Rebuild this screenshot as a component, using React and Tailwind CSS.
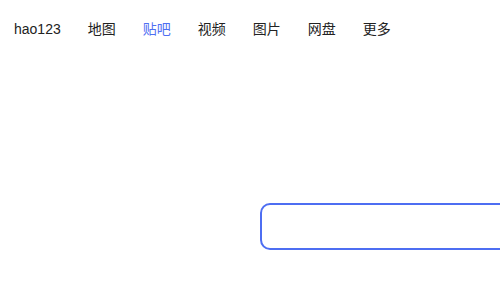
export default function App() {
  const links = ["hao123", "地图", "贴吧", "视频", "图片", "网盘", "更多"];
  return (
    <div
      className="w-[500px] h-[300px] overflow-hidden bg-white relative"
      style={{ fontFamily: '"Liberation Sans", Arial, "Noto Sans CJK SC", sans-serif' }}
    >
      <div className="flex items-center h-[58px] pl-[14px] gap-[27px] text-[14px] text-[#222]">
        {links.map((l) => (
          <a key={l} className={l === "贴吧" ? "text-[#4e6ef2]" : "text-[#222]"}>
            {l}
          </a>
        ))}
      </div>
      <div className="pl-[260px] pt-[145px]">
        <div className="w-[560px] h-[47px] border-2 border-[#4e6ef2] rounded-l-[10px] rounded-r-none bg-white" />
      </div>
    </div>
  );
}
